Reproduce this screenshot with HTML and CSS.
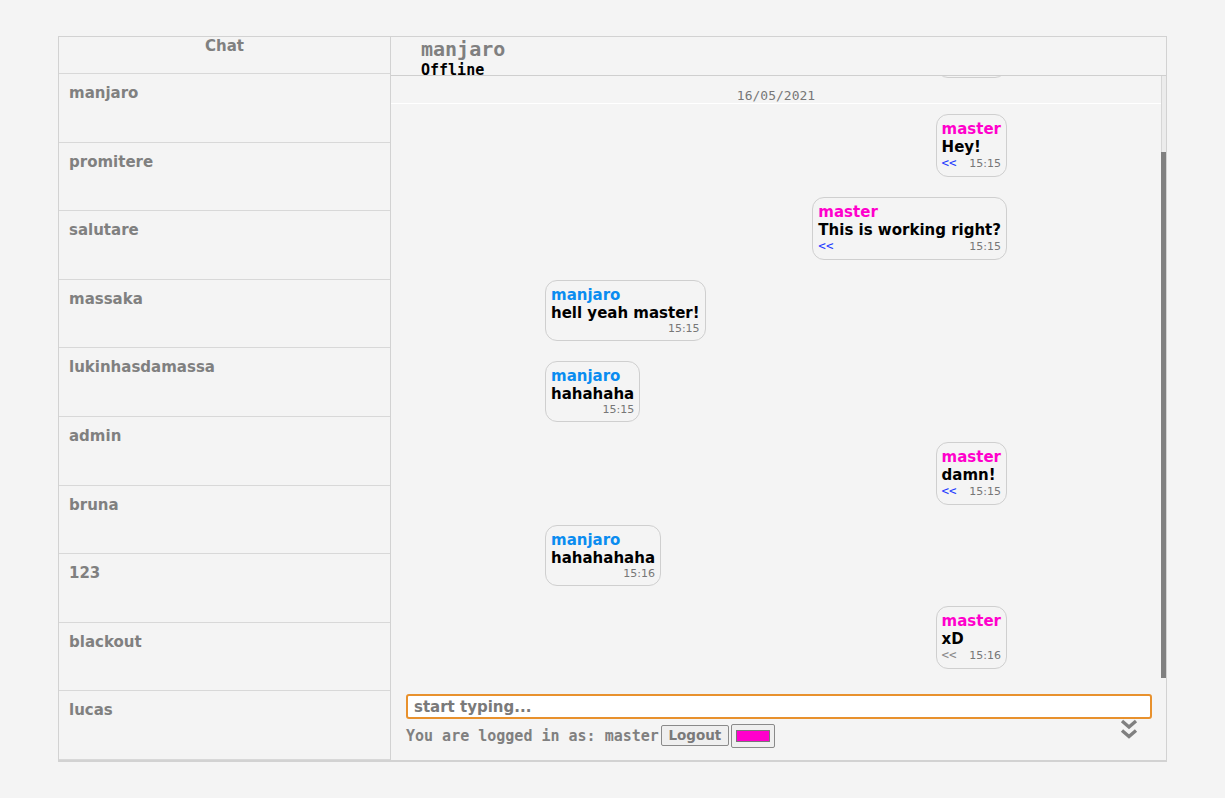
FILE: index.html
```html
<!DOCTYPE html>
<html lang="en">
<head>
<meta charset="utf-8">
<title>Chat</title>
<link rel="stylesheet" href="styles.css">
</head>
<body>
<div class="app">
  <aside class="contacts">
    <div class="contacts-title">Chat</div>
    <ul class="contact-list">
      <li class="contact">manjaro</li>
      <li class="contact">promitere</li>
      <li class="contact">salutare</li>
      <li class="contact">massaka</li>
      <li class="contact">lukinhasdamassa</li>
      <li class="contact">admin</li>
      <li class="contact">bruna</li>
      <li class="contact">123</li>
      <li class="contact">blackout</li>
      <li class="contact">lucas</li>
    </ul>
  </aside>
  <main class="chat">
    <header class="chat-header">
      <div class="peer-name">manjaro</div>
      <div class="peer-status">Offline</div>
    </header>
    <div class="messages">
      <div class="viewport">
        <div class="thread">
          <section class="day day-prev">
            <div class="bubbles">
              <div class="bubble mine">
                <div class="author">master</div>
                <div class="text">hi!</div>
                <div class="meta"><span class="reply">&lt;&lt;</span><span class="time">15:14</span></div>
              </div>
            </div>
          </section>
          <section class="day">
            <div class="day-date">16/05/2021</div>
            <div class="bubbles">
              <div class="bubble mine">
                <div class="author">master</div>
                <div class="text">Hey!</div>
                <div class="meta"><span class="reply">&lt;&lt;</span><span class="time">15:15</span></div>
              </div>
              <div class="bubble mine">
                <div class="author">master</div>
                <div class="text">This is working right?</div>
                <div class="meta"><span class="reply">&lt;&lt;</span><span class="time">15:15</span></div>
              </div>
              <div class="bubble theirs">
                <div class="author">manjaro</div>
                <div class="text">hell yeah master!</div>
                <div class="meta"><span class="time">15:15</span></div>
              </div>
              <div class="bubble theirs">
                <div class="author">manjaro</div>
                <div class="text">hahahaha</div>
                <div class="meta"><span class="time">15:15</span></div>
              </div>
              <div class="bubble mine">
                <div class="author">master</div>
                <div class="text">damn!</div>
                <div class="meta"><span class="reply">&lt;&lt;</span><span class="time">15:15</span></div>
              </div>
              <div class="bubble theirs">
                <div class="author">manjaro</div>
                <div class="text">hahahahaha</div>
                <div class="meta"><span class="time">15:16</span></div>
              </div>
              <div class="bubble mine">
                <div class="author">master</div>
                <div class="text">xD</div>
                <div class="meta"><span class="reply reply-muted">&lt;&lt;</span><span class="time">15:16</span></div>
              </div>
            </div>
          </section>
        </div>
      </div>
      <div class="scrollbar">
        <div class="scroll-track"></div>
        <div class="scroll-thumb"></div>
      </div>
    </div>
    <footer class="composer">
      <input class="composer-input" type="text" placeholder="start typing..." autofocus>
      <div class="status-row">
        <span class="status-text">You are logged in as: master</span>
        <button class="logout-btn" type="button">Logout</button>
        <span class="color-btn"><span class="color-swatch"></span></span>
        <span class="scroll-down">
          <svg width="18" height="21" viewBox="0 0 18 21" aria-hidden="true">
            <path d="M2 2 L9 8 L16 2" fill="none" stroke="#808080" stroke-width="3.4"/>
            <path d="M2 11.5 L9 17.5 L16 11.5" fill="none" stroke="#808080" stroke-width="3.4"/>
          </svg>
        </span>
      </div>
    </footer>
  </main>
</div>
</body>
</html>
```
FILE: styles.css
```css
html, body {
  margin: 0;
  padding: 0;
  background: #f4f4f4;
}

body {
  font-family: "DejaVu Sans", sans-serif;
}

.app {
  display: flex;
  box-sizing: border-box;
  width: 1109px;
  height: 726px;
  margin: 36px 0 0 58px;
  border: 1px solid #d2d2d2;
  border-bottom-width: 2px;
  background: #f4f4f4;
}

/* ---------- contacts ---------- */
.contacts {
  box-sizing: border-box;
  width: 332px;
  flex: none;
  display: flex;
  flex-direction: column;
  border-right: 1px solid #d2d2d2;
}

.contacts-title {
  height: 36px;
  border-bottom: 1px solid #d8d8d8;
  text-align: center;
  font-weight: bold;
  font-size: 15px;
  line-height: 18px;
  color: #808080;
}

.contact-list {
  list-style: none;
  margin: 0;
  padding: 0;
  flex: 1;
  display: flex;
  flex-direction: column;
}

.contact {
  flex: 1;
  padding: 10px 10px 0;
  border-bottom: 1px solid #d8d8d8;
  font-weight: bold;
  font-size: 15px;
  line-height: 18px;
  color: #808080;
}

/* ---------- chat ---------- */
.chat {
  flex: 1;
  min-width: 0;
  display: flex;
  flex-direction: column;
}

.chat-header {
  height: 38px;
  flex: none;
  padding-left: 30px;
  border-bottom: 1px solid #cfcfcf;
  font-family: "DejaVu Sans Mono", monospace;
  font-weight: bold;
}

.peer-name {
  font-size: 20px;
  line-height: 25px;
  color: #808080;
}

.peer-status {
  font-size: 15px;
  line-height: 17px;
  color: #000;
}

.messages {
  height: 602px;
  flex: none;
  display: flex;
}

.viewport {
  flex: 1;
  min-width: 0;
  overflow: hidden;
  display: flex;
  flex-direction: column-reverse;
}

.scrollbar {
  width: 5px;
  flex: none;
  display: flex;
  flex-direction: column;
}

.scroll-track {
  height: 76px;
  box-sizing: border-box;
  background: #ececec;
  border-left: 1px solid #d6d6d6;
}

.scroll-thumb {
  flex: 1;
  background: #808080;
}

.thread {
  padding-top: 16px;
}

.day-date {
  padding-top: 10px;
  border-bottom: 1px solid #ffffff;
  text-align: center;
  font-family: "DejaVu Sans Mono", monospace;
  font-size: 13px;
  line-height: 15px;
  color: #777;
}

.bubbles {
  width: 60%;
  margin: 0 auto;
  display: flex;
  flex-direction: column;
  padding-bottom: 9px;
}

.day-prev .bubbles {
  padding-bottom: 0;
}

.bubble {
  border: 1px solid #cfcfcf;
  border-radius: 12px;
  padding: 5px 5px;
  margin-top: 20px;
  font-weight: bold;
  font-size: 15px;
  line-height: 18px;
}

.bubbles .bubble:first-child {
  margin-top: 10px;
}

.mine {
  align-self: flex-end;
}

.theirs {
  align-self: flex-start;
}

.author {
  white-space: nowrap;
}

.mine .author {
  color: #ff00cc;
}

.theirs .author {
  color: #0a8cf0;
}

.text {
  color: #000;
  white-space: nowrap;
}

.meta {
  display: flex;
  align-items: baseline;
  justify-content: flex-end;
  font-weight: normal;
}

.reply {
  margin-right: auto;
  padding-bottom: 2px;
  font-family: "DejaVu Sans Mono", monospace;
  font-size: 12.5px;
  line-height: 13px;
  color: #1f3cff;
}

.reply-muted {
  color: #8a8a8a;
}

.time {
  padding-left: 12px;
  font-size: 11px;
  line-height: 13px;
  color: #777;
}

/* ---------- composer ---------- */
.composer {
  flex: 1;
  padding: 16px 14px 0 15px;
}

.composer-input {
  display: block;
  box-sizing: border-box;
  width: 100%;
  height: 25px;
  margin: 0;
  padding: 0 6px;
  border: 2px solid #e8912d;
  border-radius: 3px;
  background: #fff;
  outline: none;
  font-family: "DejaVu Sans", sans-serif;
  font-weight: bold;
  font-size: 15px;
  color: #333;
}

.composer-input::placeholder {
  color: #7a7a7a;
}

.status-row {
  display: flex;
  align-items: center;
  height: 24px;
  margin-top: 5px;
}

.status-text {
  font-family: "DejaVu Sans Mono", monospace;
  font-weight: bold;
  font-size: 15px;
  line-height: 18px;
  color: #808080;
  white-space: nowrap;
}

.logout-btn {
  box-sizing: border-box;
  width: 68px;
  height: 21px;
  margin: -1px 0 0 2px;
  padding: 0;
  border: 1px solid #8a8a8a;
  border-radius: 2px;
  background: #efefef;
  font-family: "DejaVu Sans", sans-serif;
  font-weight: bold;
  font-size: 13.5px;
  line-height: 19px;
  color: #7a7a7a;
}

.color-btn {
  box-sizing: border-box;
  display: flex;
  align-items: center;
  justify-content: center;
  width: 44px;
  height: 24px;
  margin: -1px 0 0 2px;
  border: 1px solid #8a8a8a;
  border-radius: 2px;
  background: #efefef;
}

.color-swatch {
  box-sizing: border-box;
  width: 34px;
  height: 12px;
  border: 1px solid #777;
  background: #ff00cc;
}

.scroll-down {
  display: flex;
  margin-left: auto;
  margin-right: 14px;
  align-self: flex-start;
  margin-top: -5px;
}
```
